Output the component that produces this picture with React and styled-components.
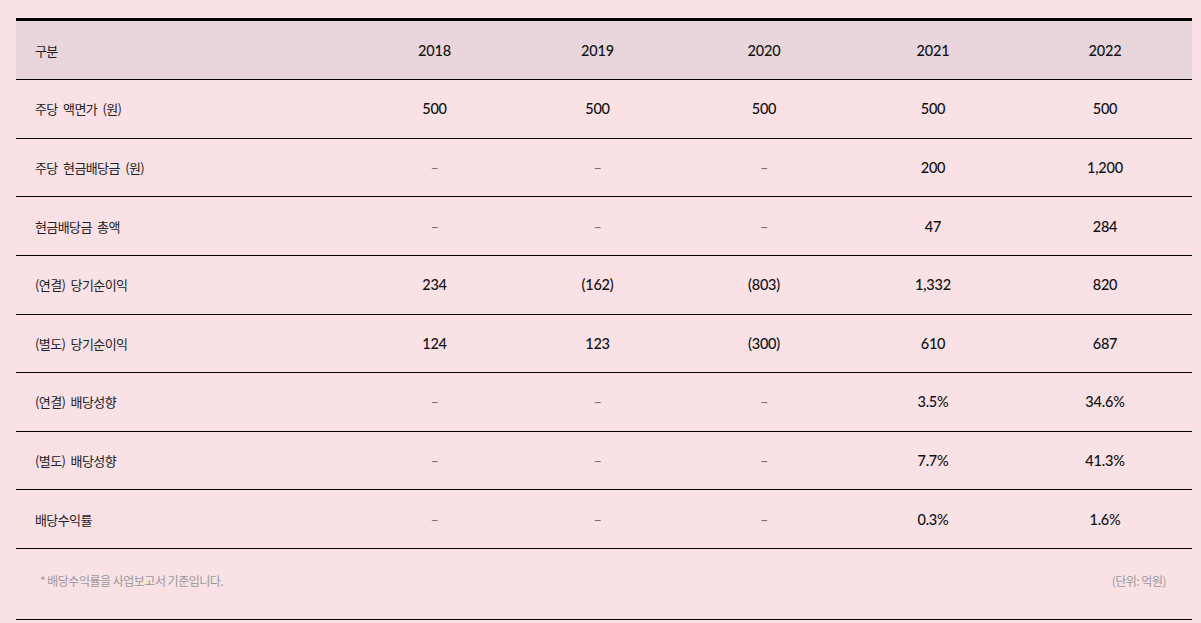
import React from "react";
import styled, { createGlobalStyle } from "styled-components";

const GlobalStyle = createGlobalStyle`
  html, body {
    margin: 0;
    padding: 0;
    background: #f9e1e6;
  }
  body {
    font-family: "Lato", "Noto Sans CJK KR", sans-serif;
    color: #111;
  }
`;

const columns = "338px 161px 165px 168px 170px 174px";

const years = ["2018", "2019", "2020", "2021", "2022"];

const rows = [
  { label: "주당 액면가 (원)", values: ["500", "500", "500", "500", "500"] },
  { label: "주당 현금배당금 (원)", values: ["–", "–", "–", "200", "1,200"] },
  { label: "현금배당금 총액", values: ["–", "–", "–", "47", "284"] },
  { label: "(연결) 당기순이익", values: ["234", "(162)", "(803)", "1,332", "820"] },
  { label: "(별도) 당기순이익", values: ["124", "123", "(300)", "610", "687"] },
  { label: "(연결) 배당성향", values: ["–", "–", "–", "3.5%", "34.6%"] },
  { label: "(별도) 배당성향", values: ["–", "–", "–", "7.7%", "41.3%"] },
  { label: "배당수익률", values: ["–", "–", "–", "0.3%", "1.6%"] },
];

function DividendTable() {
  return (
    <Wrapper>
      <Table>
        <Row $head>
          <Label>구분</Label>
          {years.map((y) => (
            <Value key={y}>{y}</Value>
          ))}
        </Row>
        {rows.map((r) => (
          <Row key={r.label}>
            <Label>{r.label}</Label>
            {r.values.map((v, i) => (
              <Value key={i} $dash={v === "–"}>
                {v}
              </Value>
            ))}
          </Row>
        ))}
      </Table>
      <Footer>
        <span>* 배당수익률을 사업보고서 기준입니다.</span>
        <span>(단위: 억원)</span>
      </Footer>
    </Wrapper>
  );
}

export default function App() {
  return (
    <>
      <GlobalStyle />
      <DividendTable />
    </>
  );
}

const Wrapper = styled.section`
  width: 1176px;
  margin-left: 16px;
  padding-top: 18px;
`;

const Table = styled.div`
  border-top: 3px solid #000;
`;

const Row = styled.div`
  display: grid;
  grid-template-columns: ${columns};
  align-items: center;
  height: ${(p) => (p.$head ? "58px" : "57.625px")};
  background: ${(p) => (p.$head ? "#e8d6dc" : "transparent")};
  border-bottom: 1px solid #000;
  box-sizing: content-box;
`;

const Label = styled.div`
  padding-left: 19px;
  font-family: "Noto Sans CJK KR", sans-serif;
  font-size: 13px;
  letter-spacing: -0.6px;
  word-spacing: 3px;
  color: #222;
`;

const Value = styled.div`
  text-align: center;
  font-family: "Lato", sans-serif;
  font-size: 14.5px;
  letter-spacing: -0.2px;
  font-weight: ${(p) => (p.$dash ? 400 : 500)};
  color: ${(p) => (p.$dash ? "#777" : "#111")};
`;

const Footer = styled.div`
  display: flex;
  justify-content: space-between;
  align-items: center;
  height: 71px;
  padding: 0 26px 8px 24px;
  box-sizing: border-box;
  border-bottom: 1px solid #000;
  font-family: "Noto Sans CJK KR", sans-serif;
  font-size: 12px;
  letter-spacing: -0.5px;
  color: #999;
`;
